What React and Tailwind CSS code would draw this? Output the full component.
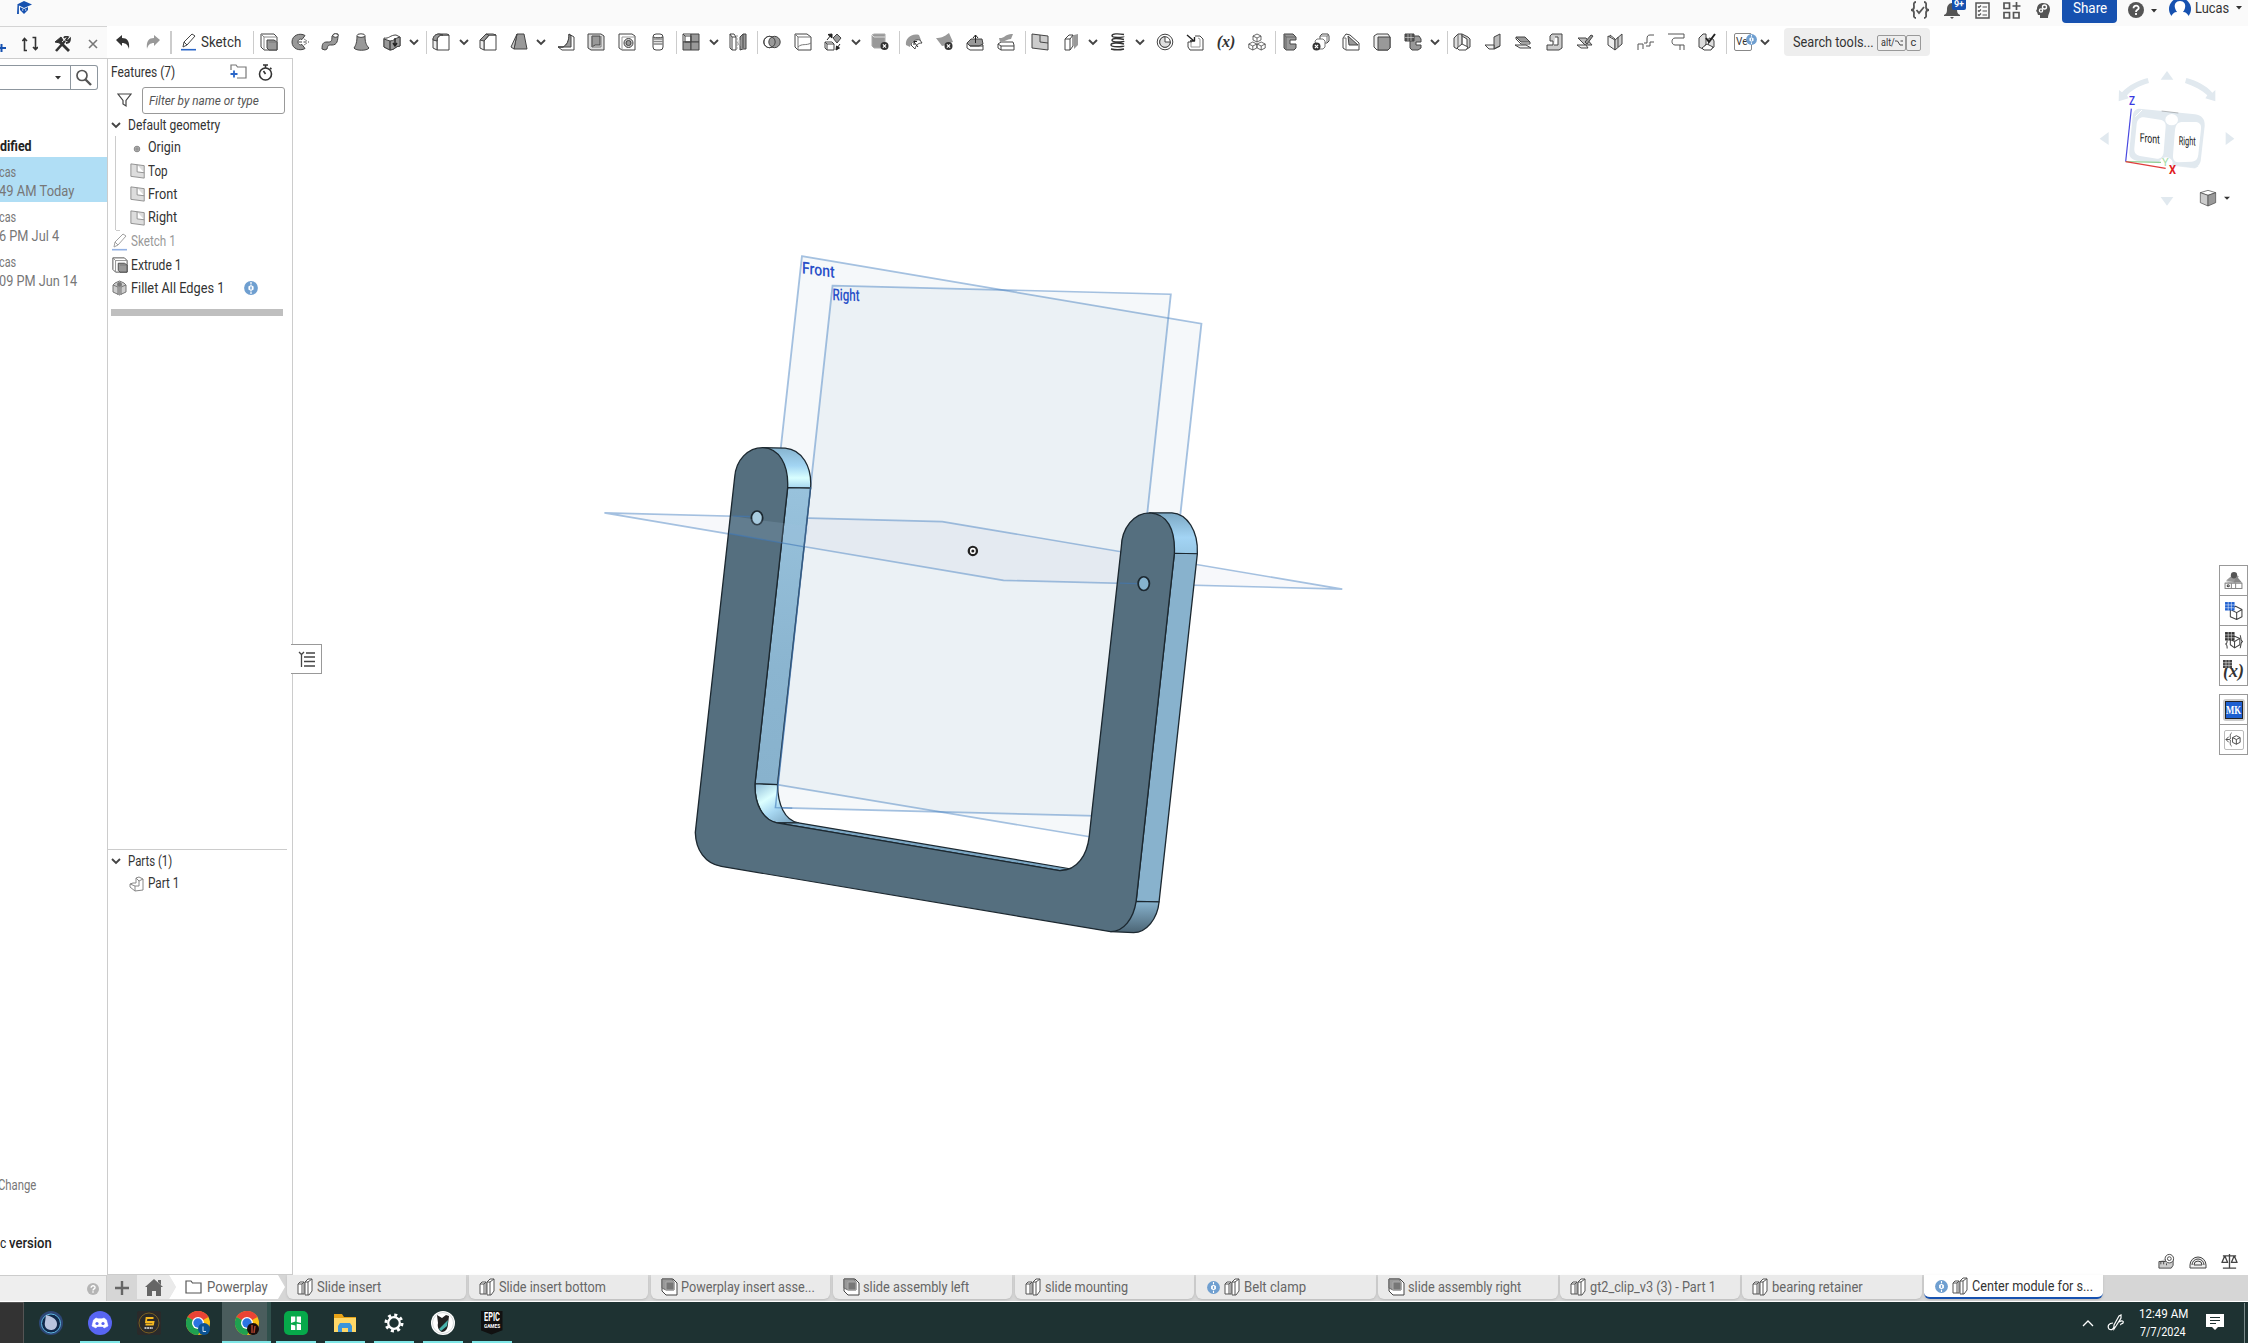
import React, { useLayoutEffect, useRef, useState } from "react";

/* Text squeezed horizontally to an exact width. */
function Fit({ w, children, className = "" }) {
  const ref = useRef(null);
  const [s, setS] = useState(1);
  useLayoutEffect(() => {
    setS(w / ref.current.offsetWidth);
  }, [w, children]);
  return (
    <span className={"block shrink-0 whitespace-nowrap " + className} style={{ width: w }}>
      <span
        ref={ref}
        className="inline-block origin-left"
        style={{ transform: `scaleX(${s})` }}
      >
        {children}
      </span>
    </span>
  );
}

const D = "#444";
const G = "#999";

function I({ children, s = 18, className = "" }) {
  return (
    <svg
      width={s}
      height={s}
      viewBox="0 0 18 18"
      fill="none"
      stroke={D}
      strokeWidth="1"
      strokeLinejoin="round"
      className={"shrink-0 " + className}
    >
      {children}
    </svg>
  );
}

const X = ({ x, y }) => (
  <>
    <circle cx={x} cy={y} r="4" fill="#333" stroke="none" />
    <path d={`M${x - 1.6} ${y - 1.6}l3.2 3.2m0-3.2l-3.2 3.2`} stroke="#fff" strokeWidth="1.2" />
  </>
);

const ic = {
  extrude: (
    <>
      <path d="M1 1h13l3 3v13H4l-3-3z" fill="#fff" />
      <path d="M1 1l3 3h13M4 4v13" stroke="#888" />
      <path d="M7 7h7l3 2v8H9l-2-2z" fill={G} />
      <path d="M9 9h8" stroke="#777" />
    </>
  ),
  revolve: (
    <>
      <path d="M14 2.500C9-.5 1 2 1 9s8 9.500 13 6.500l-3-4c-2 1-4 0-4-2.500s2-3.500 4-2.500z" fill={G} />
      <path d="M8 9h10" strokeDasharray="3 1.500" />
      <path d="M13 6l3 2M13 12l3-2" stroke="#888" />
    </>
  ),
  sweep: (
    <>
      <path d="M1 16c0-5 1-7 5-7 4 0 5 0 5-6l2-2h4c0 7-1 11-6 11-4 0-4 0-5 4l-2 1z" fill={G} />
      <ellipse cx="14.500" cy="2.500" rx="2.700" ry="1.800" fill="#fff" />
    </>
  ),
  loft: (
    <>
      <path d="M5 3c0 6-1 9-3 12 2 3 13 3 15 0-3-3-4-6-4-12z" fill={G} />
      <ellipse cx="9" cy="2.600" rx="4" ry="1.800" fill="#fff" />
    </>
  ),
  thicken: (
    <>
      <path d="M1 5c5 1 6-3 12-3l4 2v9c-5 0-5 4-10 4l-6-3z" fill="#fff" />
      <path d="M1 6l6 2v9l-6-3zM7 8c4 0 5-3 10-4v9c-5 0-5 4-10 4z" fill={G} />
      <path d="M12 5v7m-2-2l2 3 2-3" stroke="#222" strokeWidth="1.400" />
    </>
  ),
  fillet: (
    <>
      <path d="M5 17V8c0-4 2-6 6-6h6v15z" fill="#fff" />
      <path d="M1 15V7c0-4 3-6 6-6h8l2 1h-6C7 2 5 4 5 8v9z" fill="#eee" />
      <path d="M1 7c0-4 3-6 6-6l4 1C7 2 5 4 5 8z" fill={G} />
    </>
  ),
  chamfer: (
    <>
      <path d="M5 17V8l5-6h7v15z" fill="#fff" />
      <path d="M1 15V7l6-6h7l3 1h-7L5 8v9z" fill="#eee" />
      <path d="M1 7l6-6 3 1-5 6z" fill={G} />
    </>
  ),
  draft: (
    <>
      <path d="M7 1h7l3 15H4z" fill={G} />
      <path d="M7 1L1 14l3 2z" fill="#ccc" />
    </>
  ),
  rib: (
    <>
      <path d="M12 1l5 3v13H5l-4-3h5c4-2 6-6 6-13z" fill="#fff" />
      <path d="M12 1l2 2v11H5l-4 0h5c4-2 6-6 6-13z" fill={G} />
    </>
  ),
  shell: (
    <>
      <path d="M1 1h13l3 2v14H4l-3-2z" fill="#ddd" />
      <path d="M5 3h8v9H8l-3 2z" fill={G} />
      <path d="M5 3v11h9V3" stroke="#777" />
    </>
  ),
  hole: (
    <>
      <path d="M1 1h13l3 2v14H4l-3-2z" fill="#fff" />
      <path d="M4 4v13M4 4h13" stroke="#999" />
      <circle cx="10.500" cy="10" r="4.500" fill="#ccc" />
      <circle cx="10.500" cy="10" r="2.500" fill={G} />
    </>
  ),
  thread: (
    <>
      <rect x="4" y="1" width="10" height="16" rx="3" fill="#fff" />
      <path d="M4 6h10M4 8.500h10M4 11h10" stroke="#888" strokeWidth="1.600" />
      <path d="M4 4c3 1 7 1 10 0" />
    </>
  ),
  pattern: (
    <>
      <rect x="1" y="1" width="8" height="8" fill="#fff" />
      <rect x="9" y="1" width="8" height="8" fill={G} />
      <rect x="1" y="9" width="8" height="8" fill={G} />
      <rect x="9" y="9" width="8" height="8" fill={G} />
      <path d="M3 3h6v6H3zM1 1l2 2" />
    </>
  ),
  mirror: (
    <>
      <path d="M1 1h4l2 3v13H3l-2-2zM3 4v13M1 1l2 3h4" fill="#fff" />
      <path d="M8 2v14" stroke="#999" strokeDasharray="2 1" />
      <path d="M11 4l3-3h3v15h-3l-3 1zM14 1v14" fill={G} />
      <path d="M7 8l4 5V7" fill="#ddd" stroke="#999" />
    </>
  ),
  boolean: (
    <>
      <circle cx="6.500" cy="9" r="5.700" fill="#fff" />
      <circle cx="11.500" cy="9" r="5.700" fill={G} />
      <circle cx="6.500" cy="9" r="5.700" />
    </>
  ),
  split: (
    <>
      <path d="M1 1h12l4 3v13H4l-3-3z" fill="#fff" />
      <path d="M1 1l3 3h13M4 4v13M4 14c4-4 8-1 13-4" stroke="#777" />
    </>
  ),
  transform: (
    <>
      <path d="M1 9h7l2 2v6H3l-2-2zM3 11v6M3 11h7M1 9l2 2" fill="#fff" />
      <path d="M13 1l4 4-4 5-4-5z" fill={G} />
      <path d="M3 7l4-5M4 1.500L8 1v4z" fill="#222" stroke="#222" />
      <path d="M16 11l-3 4m-1 2l.5-4 3 2z" fill="#222" stroke="#222" />
    </>
  ),
  deletePart: (
    <>
      <path d="M1 2l2-1h11v11l-2 3H3l-2-2z" fill={G} stroke="#aaa" />
      <path d="M1 2l2 2h11" stroke="#ddd" />
      <X x={13.500} y={13} />
    </>
  ),
  modFillet: (
    <>
      <path d="M1 12C0 6 6 0 14 2l2 5C10 5 6 8 5 14z" fill={G} stroke="none" />
      <path d="M6 12c1-4 5-6 9-5l2 3c-4 0-6 2-7 6z" fill="#fff" />
      <path d="M13 14L9 9m0 3V8.500h3" stroke="#222" />
    </>
  ),
  delFace: (
    <>
      <path d="M0 5c5 0 8-1 13-5l4 9c-4 1-8 4-11 4z" fill={G} stroke="none" />
      <X x={12.500} y={13} />
    </>
  ),
  moveFace: (
    <>
      <path d="M1 10h12l4 2v5H4l-3-2z" fill="#fff" />
      <path d="M1 10l4-4h11l1 5-4 2H4z" fill={G} />
      <path d="M4 13h13" />
      <path d="M9.500 10V2m-2.500 3l2.500-3 2.500 3" stroke="#222" />
    </>
  ),
  replace: (
    <>
      <path d="M1 11l3-2h12l1 3v5H4l-3-2zM4 13h13M1 11l3 2v4" fill="#fff" />
      <path d="M2 5c5 1 7-5 14-4l-2 5c-4 0-6 3-11 3z" fill={G} stroke="none" />
    </>
  ),
  plane: (
    <>
      <path d="M1 1l16 2v14L1 15z" fill="#ccc" />
      <path d="M9 2v7l8 1" />
    </>
  ),
  surf: (
    <>
      <path d="M3 6l4-4h4v11l-3 4H3z" fill="#fff" />
      <path d="M3 6h5v11M8 6l3-4" />
      <path d="M12 2l4-1v11l-4 4V7z" fill={G} stroke="none" />
    </>
  ),
  helix: (
    <path
      d="M15 1.500C9 .5 3 .5 3 2.800s12 1.700 12 .7M15 6.500C9 5 3 5 3 7.300s12 2 12 .7M15 11C9 9.500 2 9.500 2 12s13 2 13 .7M2 16c4 1 9 1 13 0"
      stroke="#333"
      strokeWidth="1.400"
    />
  ),
  curve: (
    <>
      <circle cx="9" cy="9" r="7.800" fill="#fff" />
      <circle cx="9" cy="9" r="5.300" fill="#fff" />
      <path d="M9 3.700v5.300h5.300A5.300 5.300 0 0 1 9 14.300 5.300 5.300 0 0 1 9 3.700z" fill="#ddd" />
    </>
  ),
  derived: (
    <>
      <path d="M9 3h5l3 3v11H4l-2-3V9h4" fill="#fff" />
      <path d="M5 10v4h9V6l-2-1" stroke="#999" />
      <path d="M1 2l7 6M4 8h4.500V4" stroke="#222" strokeWidth="1.400" />
    </>
  ),
  composite: (
    <>
      {[
        [9, 1],
        [4.8, 9],
        [13.2, 9],
      ].map(([x, y]) => (
        <path key={x} d={`M${x} ${y}l4 2v4l-4 2-4-2v-4zm0 8v-4l4-2m-4 2l-4-2`} fill="#fff" strokeWidth=".8" />
      ))}
    </>
  ),
  frame: (
    <>
      <path d="M3 1h9l3 3v3H9v4h6v4l-2 2H5l-2-2z" fill={G} />
      <path d="M3 1l2 3h10M5 4v13" stroke="#666" />
    </>
  ),
  frameTrim: (
    <>
      <path d="M8 3l2-2h6l1 2v5l-2 2H8z" fill="#fff" />
      <path d="M8 3h7l2-1M15 3v6" stroke="#777" />
      <path d="M3 8l2-2h6l2 2v6l-2 2H5z" fill="#fff" stroke="#777" />
      <X x={4.500} y={13.500} />
    </>
  ),
  gusset: (
    <>
      <path d="M1 5l3-4 4 1 9 8v7H4l-3-2z" fill="#fff" />
      <path d="M6 3l1 9h9z" fill={G} />
      <path d="M4 5v12M1 5l3 0" stroke="#777" />
    </>
  ),
  endcap: (
    <>
      <path d="M1 3l3-2h11l2 3v11l-2 2H4l-3-3z" fill="#eee" />
      <path d="M5 4h12v11l-2 2H5z" fill={G} />
    </>
  ),
  cutlist: (
    <>
      <path d="M8 3h7l2 3v3h-5v3h5v3l-3 2H8l-2-2V8z" fill={G} />
      <path d="M1 1h9v7H1z" fill="#555" />
      <path d="M1 4.500h9M4 1v7M7 1v7" stroke="#ddd" strokeWidth=".6" />
    </>
  ),
  sm1: (
    <>
      <path d="M1 5l4-4h4v10l-5 5-3-2z" fill="#ddd" />
      <path d="M9 1l6 3 2 2v8l-3 2V6L9 3z" fill="#ccc" />
      <path d="M4 15l5-4 6 3-2 3H6z" fill="#fff" />
      <path d="M5 1v13M9 1v10" stroke="#666" />
    </>
  ),
  sm2: (
    <>
      <path d="M10 4l6-3v12l-6 3z" fill="#bbb" />
      <path d="M1 12h9v4H5zM10 16l6-3" fill="#eee" />
    </>
  ),
  sm3: (
    <>
      <path d="M2 4l9 0 5 5-9 0z" fill={G} />
      <path d="M2 4l0 2 5 5h9v-2" />
      <path d="M1 12h11l5 3H6z" fill="#eee" />
    </>
  ),
  sm4: (
    <>
      <path d="M5 3l2-2h10v14l-3 2H2v-5h6V8H5z" fill="#ccc" />
      <path d="M10 4h3v8H9" fill="#fff" />
    </>
  ),
  sm5: (
    <>
      <path d="M2 5l8 0 6 7-7 0z" fill="#bbb" />
      <path d="M9 9l6-7 2 1-6 8z" fill={G} />
      <path d="M1 12h9l2 3H5z" fill="#eee" />
    </>
  ),
  sm6: (
    <>
      <path d="M2 3l7 4v10l-7-5z" fill="#eee" />
      <path d="M9 7l7-6v10l-7 6z" fill="#ccc" />
      <path d="M12 4v10M4 4V2l5 4" />
    </>
  ),
  sm7: <path d="M1 17v-6h5v5M7 10h3V6c0-3 1-4 3-4h4M9 13h4V9h4" stroke="#555" />,
  sm8: <path d="M1 1h16v4H8c-4 0-4 7 0 7h9v5M13 12v5" stroke="#555" />,
  sm9: (
    <>
      <path d="M1 5l4-4h3v10l-3 5-4-2zM11 5l4 1 1 2v6l-3 2-3-2z" fill="#ddd" />
      <path d="M4 15l5-4 6 3-2 3H6z" fill="#fff" />
      <path d="M8 5l3 4 6-8" stroke="#222" strokeWidth="2" />
    </>
  ),
};

const Chev = ({ className = "" }) => (
  <svg width="10" height="7" viewBox="0 0 10 7" fill="none" stroke="#444" strokeWidth="1.900" className={"shrink-0 " + className}>
    <path d="M1 1l4 4 4-4" />
  </svg>
);

const Pencil = ({ light }) => (
  <I className={light ? "opacity-50" : ""}>
    <path d="M3 14l1-5 8-8 3 2-8 9zM4 9l3 3" stroke="#444" />
    <path d="M1 16.700h15" stroke="#2a66c8" strokeWidth="1.600" />
  </I>
);

const VarX = ({ className = "" }) => (
  <span className={"font-['Liberation_Serif',serif] font-bold italic text-[16px] leading-none text-[#333] " + className}>(x)</span>
);

const groups = [
  ["w-[172px]", ["extrude", "revolve", "sweep", "loft", "thicken", "v"]],
  ["w-[250px]", ["fillet", "v", "chamfer", "draft", "v", "rib", "shell", "hole", "thread"]],
  ["w-[81px]", ["pattern", "v", "mirror"]],
  ["w-[142px]", ["boolean", "split", "transform", "v", "deletePart"]],
  ["w-[126px]", ["modFillet", "delFace", "moveFace", "replace"]],
  ["w-[250px]", ["plane", "surf", "v", "helix", "v", "curve", "derived", "x", "composite"]],
  ["w-[172px]", ["frame", "frameTrim", "gusset", "endcap", "cutlist", "v"]],
  ["w-[279px]", ["sm1", "sm2", "sm3", "sm4", "sm5", "sm6", "sm7", "sm8", "sm9"]],
];

function Badge({ s = 14 }) {
  return (
    <svg width={s} height={s} viewBox="0 0 14 14" className="shrink-0">
      <circle cx="7" cy="7" r="6.900" fill="#6f9fd0" />
      <path d="M7 4l2.600 1.500v3L7 10 4.400 8.500v-3z" fill="#fff" />
      <path d="M7 1v2.400M7 10.600V13" stroke="#fff" strokeWidth="1.200" />
      <path d="M7 5.500v3" stroke="#6f9fd0" strokeWidth="1.400" />
    </svg>
  );
}

function TopBar() {
  return (
    <div className="flex h-[26px] shrink-0 items-start bg-[#fafafa]">
      <svg width="16" height="15" viewBox="0 0 16 15" className="ml-4" fill="#1651b0">
        <path d="M8 1l8 3.500L8 8 1 4.500z" />
        <path d="M4 7l4 2 4-2v3l-4 4-4-4zM1.500 5h1.400v9H1z" />
        <path d="M6 10h1.300M9 10h1.300" stroke="#fff" />
      </svg>
      <div className="ml-auto flex h-5 items-center">
        <svg width="20" height="18" viewBox="0 0 20 18" fill="none" stroke="#555" strokeWidth="1.800">
          <path d="M6 1C3 1 4 4 4 6S3 9 1 9c2 0 3 1 3 3s-1 5 2 5M14 1c3 0 2 3 2 5s1 3 3 3c-2 0-3 1-3 3s1 5-2 5M6.500 9l2.500 3 5-6" />
        </svg>
        <span className="relative ml-3.5 block h-5 w-[22px]">
          <svg width="16" height="17" viewBox="0 0 16 17" fill="#555" className="mt-[2px]">
            <path d="M8 1C5 1 3 4 3 7c0 4-1 5-3 6v1h16v-1c-2-1-3-2-3-6 0-3-2-6-5-6zM6 15h4l-2 2z" />
          </svg>
          <span className="absolute top-0 left-[8px] h-[10px] w-[14px] rounded-b-[2px] bg-[#1651b0] text-center text-[9px] leading-[8px] font-bold text-white">9+</span>
        </span>
        <svg width="15" height="17" viewBox="0 0 15 17" fill="none" stroke="#555" strokeWidth="1.500" className="ml-[9px]">
          <rect x="1" y="1" width="13" height="15" />
          <path d="M3 4.500l1 1 2-2M3 8.500l1 1 2-2M3 12.500l1 1 2-2M7.500 5H12M7.500 9H12M7.500 13H12" strokeWidth="1.200" />
        </svg>
        <svg width="18" height="17" viewBox="0 0 18 17" fill="none" stroke="#555" strokeWidth="1.700" className="ml-[13px]">
          <path d="M1 1h5.500v5.500H1zM1 10.500h5.500V16H1zM10.500 10.500H16V16h-5.500zM13.500 0v8M9.500 4h8" />
        </svg>
        <svg width="16" height="17" viewBox="0 0 16 17" className="ml-[14px]">
          <path d="M8 1c5 0 7 3 7 6 0 4-2 5-2 9H5v-3H3l-1-3-1-1 1-2C2 3 5 1 8 1z" fill="#555" />
          <circle cx="9.500" cy="5" r="2" fill="none" stroke="#fff" strokeWidth="1.400" />
          <circle cx="6" cy="8.500" r="1.600" fill="none" stroke="#fff" strokeWidth="1.300" />
        </svg>
      </div>
      <div className="ml-[11px] flex h-[23px] w-[55px] justify-center rounded-b bg-[#1651b0] pt-px leading-[14px] text-white">
        <Fit w={34} className="text-[15px]">Share</Fit>
      </div>
      <svg width="16" height="16" viewBox="0 0 16 16" className="mt-[2px] ml-[11px]">
        <circle cx="8" cy="8" r="8" fill="#555" />
        <path d="M5.500 6.200C5.500 2.800 11 3 10.700 6.200 10.500 8 8 7.800 8 10M8 11v2" fill="none" stroke="#fff" strokeWidth="1.800" />
      </svg>
      <svg width="6" height="4" viewBox="0 0 6 4" className="mt-[9px] ml-[7px]"><path d="M0 0h6L3 3.500z" fill="#333" /></svg>
      <svg width="22" height="20" viewBox="0 0 22 20" className="ml-3">
        <circle cx="11" cy="9" r="11" fill="#1651b0" />
        <path d="M11 1c4 0 6 3 5 7-.5 2-1.500 3-2 4 3 0 5 2 6 5l1 3H1l1-3c1-3 3-5 6-5-.5-1-1.500-2-2-4-1-4 1-7 5-7z" fill="#fff" />
      </svg>
      <Fit w={34} className="mt-[-1px] ml-1 text-[14px] leading-[18px] text-[#333]">Lucas</Fit>
      <svg width="6" height="4" viewBox="0 0 6 4" className="mt-[6px] mr-[6px] ml-[7px]"><path d="M0 0h6L3 3.500z" fill="#333" /></svg>
    </div>
  );
}

function Toolbar() {
  return (
    <div className="flex h-8 shrink-0">
      <div className="flex w-[107px] items-center border-t border-[#d4d4d4] bg-[#fafafa] pt-0.5">
        <svg width="7" height="10" viewBox="0 0 7 10" className="mt-2" stroke="#1651b0" strokeWidth="2"><path d="M0 5h6M1.500 1v8" /></svg>
        <svg width="16" height="16" viewBox="0 0 16 16" className="ml-[15px]" fill="none" stroke="#333" strokeWidth="1.600">
          <path d="M5 14.500H2.500V3M.3 5L2.500 2.500 5 5M10.500 1.500h3V13M11 11l2.500 2.500L16 11" />
        </svg>
        <svg width="17" height="16" viewBox="0 0 17 16" className="ml-4" fill="none" stroke="#333">
          <path d="M2 15L11 5" strokeWidth="2.600" />
          <path d="M10 2c1-2 4-1 4-1l-2 3 2 1 2-2c0 3-2 4-4 4" strokeWidth="1.800" />
          <path d="M6 6l9 9" strokeWidth="2.800" />
          <path d="M1 6l6-5 2 3-3 3z" fill="#333" />
        </svg>
        <svg width="10" height="10" viewBox="0 0 10 10" className="ml-[17px]" stroke="#777" strokeWidth="1.600"><path d="M1 1l8 8M9 1L1 9" /></svg>
      </div>
      <div className="flex items-center">
        <svg width="14" height="14" viewBox="0 0 14 14" className="ml-[9px]" fill="#333"><path d="M0 5l6-5v3c5 0 8 3 7 11-1-4-3-6-7-6v3z" /></svg>
        <svg width="14" height="14" viewBox="0 0 14 14" className="ml-4" fill="#999"><path d="M14 5L8 0v3C3 3 0 6 1 14c1-4 3-6 7-6v3z" /></svg>
        <span className="ml-[10px] h-[23px] w-[1.500px] bg-[#ccc]" />
        <span className="ml-2"><Pencil /></span>
        <Fit w={40} className="ml-[3px] text-[14px] text-[#333]">Sketch</Fit>
        <span className="ml-[12.500px] h-[23px] w-px bg-[#ccc]" />
      </div>
      {groups.map(([w, items], gi) => (
        <div key={gi} className={"flex shrink-0 items-center " + w}>
          {items.map((k, i) =>
            k === "v" ? (
              <span key={i} className="flex w-[16.400px] shrink-0 justify-center pr-0.5"><Chev /></span>
            ) : (
              <span key={i} className="flex w-[30.600px] shrink-0 justify-center">
                {k === "x" ? <VarX /> : <I>{ic[k]}</I>}
              </span>
            )
          )}
          <span className="-mr-px ml-auto h-[23px] w-[1.500px] shrink-0 bg-[#ccc]" />
        </div>
      ))}
      <div className="flex items-center">
        <span className="relative ml-[8px] block h-[18px] w-[18px] rounded-[2px] border border-[#888] pl-px text-[10px] leading-4 text-[#333]">
          Ve
          <span className="absolute top-0 left-[11px]"><Badge s={11} /></span>
        </span>
        <Chev className="ml-[8px]" />
        <div className="ml-[14px] flex h-7 w-[146px] items-center rounded bg-[#eee] pl-[9px] text-[#333]">
          <Fit w={81} className="text-[14px]">Search tools...</Fit>
          <span className="mt-0.5 ml-[3px] flex h-4 w-[29px] items-center justify-center rounded-[2px] border border-[#999] text-[11px] leading-3">
            <Fit w={14}>alt/</Fit>
            <svg width="8" height="6" viewBox="0 0 8 6" fill="none" stroke="#444"><path d="M0 1h2.500l2.500 4h3M5.500 1H8" /></svg>
          </span>
          <span className="mt-0.5 flex h-4 w-[15px] items-center justify-center rounded-[2px] border border-[#999] text-[11px] leading-3">c</span>
        </div>
      </div>
    </div>
  );
}

const history = [
  ["cas", 17, "49 AM Today", 75, true],
  ["cas", 17, "6 PM Jul 4", 60, false],
  ["cas", 17, "09 PM Jun 14", 78, false],
];

function LeftPanel() {
  return (
    <div className="flex h-full w-[107px] shrink-0 flex-col border-t border-[#ccc] text-[14px] text-[#777]">
      <div className="mt-1.5 flex h-[25px] w-[98px] rounded-r-[3px] border border-l-0 border-[#8d969e]">
        <div className="flex w-[71px] items-center justify-end border-r border-[#8d969e] pr-[9px]">
          <svg width="6" height="4" viewBox="0 0 6 4"><path d="M0 0h6L3 3.500z" fill="#333" /></svg>
        </div>
        <svg width="17" height="17" viewBox="0 0 17 17" className="mt-[3px] ml-1" fill="none" stroke="#555">
          <circle cx="7" cy="6.500" r="5" strokeWidth="1.700" />
          <path d="M10.500 10.500L16 16" strokeWidth="2.400" />
        </svg>
      </div>
      <div className="mt-[46px] mb-px h-5 leading-5 font-bold text-[#222]"><Fit w={32}>dified</Fit></div>
      {history.map(([a, aw, b, bw, sel], i) => (
        <div key={i} className={"h-[45px] pt-1.5 leading-[19px] " + (sel ? "bg-[#b0def5]" : "")}>
          <Fit w={aw} className="-ml-px">{a}</Fit>
          <Fit w={bw} className="-ml-px">{b}</Fit>
        </div>
      ))}
      <div className="mt-auto flex flex-col">
        <Fit w={38} className="-ml-[2px] leading-5">Change</Fit>
        <div className="mt-[38px] mb-[22px] flex gap-[3px] leading-5 text-[#222]">
          <Fit w={6}>c</Fit>
          <Fit w={43} className="font-medium">version</Fit>
        </div>
      </div>
    </div>
  );
}

const PlaneIcon = () => (
  <svg width="16" height="16" viewBox="0 0 18 18" fill="#ddd" stroke="#888" className="shrink-0">
    <path d="M1 1l15 2v14L1 15zM8 2v8l8 1" />
  </svg>
);

function FeaturePanel() {
  return (
    <div className="flex h-full w-[186px] shrink-0 flex-col border border-[#ccc] text-[14px] text-[#333]">
      <div className="mt-[3px] flex h-5 items-center pl-[3px]">
        <Fit w={64}>Features (7)</Fit>
        <svg width="18" height="16" viewBox="0 0 18 16" className="ml-[54px]" fill="none" stroke="#777" strokeWidth="1.200">
          <path d="M2 6V1h5l1.500 2H17v11H8" />
          <path d="M5 6.500v7M1.500 10h7" stroke="#2a66c8" strokeWidth="1.800" />
        </svg>
        <svg width="15" height="17" viewBox="0 0 15 17" className="ml-[11px]" fill="none" stroke="#333" strokeWidth="1.600">
          <circle cx="7.500" cy="10" r="6" />
          <path d="M5 1h5M7.500 1v3M12 4l1.500 1M7.500 10L5.500 7" />
        </svg>
      </div>
      <div className="mt-[5px] flex h-[27px] items-center">
        <svg width="15" height="15" viewBox="0 0 15 15" className="ml-[9px]" fill="none" stroke="#444" strokeWidth="1.200"><path d="M1 1h13L9 7.500V13l-3-2V7.500z" /></svg>
        <div className="ml-[10px] flex h-[27px] w-[143px] items-center rounded-[3px] border border-[#999] pl-1.5 text-[#555] italic">
          <Fit w={110} className="text-[13px]">Filter by name or type</Fit>
        </div>
      </div>
      <div className="flex h-[22px] items-center pl-[3px]">
        <Chev /> <Fit w={92} className="ml-[7px]">Default geometry</Fit>
      </div>
      <div className="ml-[7px] h-[94px] border-l border-[#ccc]">
        {[["Origin", 33], ["Top", 20], ["Front", 29], ["Right", 29]].map(([n, w], i) => (
          <div key={n} className="flex h-[23.400px] items-center pl-[14px]">
            {i === 0 ? (
              <svg width="16" height="16" viewBox="0 0 16 16" fill="#bbb" stroke="#888"><circle cx="7" cy="9" r="2.800" /><path d="M7 7v4M5 9h4" /></svg>
            ) : (
              <PlaneIcon />
            )}
            <Fit w={w} className="ml-0.5">{n}</Fit>
          </div>
        ))}
        <div className="h-px w-[4px] bg-[#ccc]" />
      </div>
      <div className="flex h-[23.400px] items-center pl-[3px] text-[#999]">
        <Pencil light /><Fit w={45} className="ml-[2px]">Sketch 1</Fit>
      </div>
      <div className="flex h-[23.400px] items-center pl-[4px]">
        <I s={16}>{ic.extrude}</I><Fit w={51} className="ml-[3px]">Extrude 1</Fit>
      </div>
      <div className="flex h-[23.400px] items-center pl-[4px]">
        <svg width="15" height="16" viewBox="0 0 15 16" stroke="#777"><path d="M3 3l4.500-2L12 3l2 2v7l-6.500 3L1 12V5z" fill="#ccc" /><path d="M1 5l5 2v8M14 5L9 7v8" fill="none" /><path d="M6 7h3v8H6z" fill="#999" stroke="none" /><circle cx="7.500" cy="4.500" r="2" fill="#777" /></svg>
        <Fit w={93} className="ml-1">Fillet All Edges 1</Fit>
        <span className="ml-[20px]"><Badge /></span>
      </div>
      <div className="mt-[8.500px] ml-[3px] h-[7px] w-[172px] shrink-0 bg-[#bfbfbf]" />
      <div className="mt-auto h-[425px] shrink-0">
        <div className="w-[179px] border-t border-[#ccc]" />
        <div className="flex h-[22px] items-center pl-[3px]">
          <Chev /><Fit w={44} className="ml-[7px]">Parts (1)</Fit>
        </div>
        <div className="flex h-[23.400px] items-center pl-[21px]">
          <svg width="16" height="16" viewBox="0 0 16 16" fill="#fff" stroke="#888"><path d="M7 2l3-1 4 2v11l-8 1-5-4V8l3-1h3zM7 2l3 3v5H6L1 8M10 5l4-2M6 10v5" /></svg>
          <Fit w={31} className="ml-[3px]">Part 1</Fit>
        </div>
      </div>
    </div>
  );
}

function Model() {
  return (
    <svg
      width="800"
      height="720"
      viewBox="0 0 1568 1568"
      preserveAspectRatio="none"
      fill="none"
      className="mt-[172px] ml-[287px] shrink-0"
    >
      <defs>
        <linearGradient id="capL" x1="0" y1="474" x2="0" y2="562" gradientUnits="userSpaceOnUse">
          <stop offset="0" stopColor="#86b3ce" /><stop offset=".45" stopColor="#a3d5f3" /><stop offset=".75" stopColor="#d9ffff" /><stop offset="1" stopColor="#a5d5ef" />
        </linearGradient>
        <linearGradient id="side" x1="0" y1="562" x2="0" y2="1208" gradientUnits="userSpaceOnUse">
          <stop offset="0" stopColor="#98c2dc" /><stop offset=".6" stopColor="#8bb5d0" /><stop offset="1" stopColor="#88b2cd" />
        </linearGradient>
        <linearGradient id="filL" x1="343" y1="1206" x2="410" y2="1300" gradientUnits="userSpaceOnUse">
          <stop offset="0" stopColor="#8fbcd8" /><stop offset=".35" stopColor="#dcffff" /><stop offset=".6" stopColor="#a8d8f2" /><stop offset="1" stopColor="#769fba" />
        </linearGradient>
        <linearGradient id="capR" x1="0" y1="616" x2="0" y2="705" gradientUnits="userSpaceOnUse">
          <stop offset="0" stopColor="#7ca8c3" /><stop offset=".6" stopColor="#a3d4f4" /><stop offset="1" stopColor="#98c8e6" />
        </linearGradient>
        <linearGradient id="filR" x1="0" y1="1462" x2="0" y2="1530" gradientUnits="userSpaceOnUse">
          <stop offset="0" stopColor="#88b4cf" /><stop offset="1" stopColor="#4c6575" />
        </linearGradient>
      </defs>
      <g fill="#5a8fae" fillOpacity=".06" stroke="#4d86c4" strokeOpacity=".5" strokeWidth="3.600">
        <path d="M435 57L1218 204 1105 1341 322 1196z" />
        <path d="M495 121L1158 140 1048 1277 383 1258z" />
        <path d="M48 616L710 635 1494 782 830 763z" fill="#6070b0" fillOpacity=".05" />
      </g>
      <g stroke="#1c2830" strokeWidth="2.600" strokeLinejoin="round">
        <path d="M358 474L402 475C435 478 455 515 452 562L407 561z" fill="url(#capL)" />
        <path d="M407 561L452 562 387 1208 343 1206z" fill="url(#side)" />
        <path d="M343 1206L387 1208C388 1250 400 1285 428 1291L386 1291C358 1285 342 1250 343 1206z" fill="url(#filL)" />
        <path d="M386 1291L428 1291 960 1391 940 1395z" fill="#7ba6c3" />
        <path d="M1117 616L1160 616C1190 618 1212 655 1210 705L1165 704z" fill="url(#capR)" />
        <path d="M1165 704L1210 705 1135 1463 1090 1462z" fill="#88b2cd" />
        <path d="M1090 1462L1135 1463C1132 1500 1110 1530 1085 1530L1040 1528z" fill="url(#filR)" />
        <path
          d="M303 540C305 500 330 474 358 474 390 475 409 510 407 561L343 1206C342 1250 358 1285 386 1291L940 1395C975 1396 994 1360 998 1321L1061 690C1062 650 1085 616 1117 616 1150 618 1167 650 1165 704L1090 1462C1085 1500 1065 1528 1040 1528L277 1386C245 1380 227 1350 226 1312z"
          fill="#556f7f"
        />
        <ellipse cx="347" cy="627" rx="11" ry="15" fill="#a9cde0" strokeWidth="3.500" />
        <ellipse cx="1105" cy="770" rx="11" ry="15" fill="#86b3ce" strokeWidth="3.500" />
      </g>
      <path d="M299 623L333 624M361 633L450 645 440 690 292 661 297 623z" fill="#a8c6e0" fillOpacity=".17" />
      <path d="M300 623L333 624M292 661L440 690M1058 769L1092 770M452 560L383 1258 416 1259" stroke="#3f78b8" strokeOpacity=".6" strokeWidth="3" />
      <g fill="#2850c8" className="font-['Roboto',sans-serif] font-medium">
        <text transform="translate(435 94) skewY(9)" fontSize="36" textLength="64" lengthAdjust="spacingAndGlyphs">Front</text>
        <text transform="translate(495 153) skewY(2)" fontSize="36" textLength="53" lengthAdjust="spacingAndGlyphs">Right</text>
      </g>
      <ellipse cx="770" cy="699" rx="8" ry="9" fill="#fff" stroke="#222" strokeWidth="4.500" />
      <ellipse cx="770" cy="699" rx="3" ry="3.300" fill="#222" />
    </svg>
  );
}

function ViewCube() {
  return (
    <svg width="155" height="147" viewBox="699 200 465 441" fill="none" className="shrink-0">
      <g fill="#e1e9ef">
        <path d="M902 241L921 215 940 241zM902 593L921 619 940 593zM746 398L719 418 746 437zM1097 398L1123 418 1097 437z" />
        <path d="M863 236L867 251C840 258 815 272 801 288L806 297 776 306 777 272 786 279C805 258 835 243 863 236z" />
        <path d="M979 236L975 251C1002 260 1025 272 1042 288L1036 297 1066 306 1066 272 1057 280C1038 258 1008 243 979 236z" />
        <path d="M838 328L1005 345C1025 348 1036 360 1034 380L1022 485C1019 498 1010 504 1000 504L830 484C812 480 806 470 808 455L818 350C820 335 828 328 838 328z" />
        <path d="M930 497L1005 506 1015 500" stroke="#e1e9ef" strokeWidth="2" />
      </g>
      <g fill="#fff">
        <path d="M852 354L900 361C912 363 918 370 917 382L911 457C910 471 903 478 891 478L840 470C828 468 822 460 823 447L830 374C832 360 840 353 852 354z" />
        <path d="M965 368L1008 368C1020 370 1024 377 1023 388L1015 465C1013 480 1008 486 994 487L955 489C943 488 938 481 939 468L945 392C947 376 953 369 965 368z" />
        <ellipse cx="935" cy="361" rx="19" ry="17" />
        <ellipse cx="918" cy="490" rx="20" ry="16" />
        <path d="M826 352L846 332" stroke="#fff" strokeWidth="3" />
      </g>
      <path d="M905 335L955 341" stroke="#444" />
      <path d="M814 328L797 487" stroke="#4848e0" strokeWidth="3.500" />
      <path d="M797 487L903 489" stroke="#7cc87c" strokeWidth="3" />
      <path d="M797 487L917 507" stroke="#e03c3c" strokeWidth="3.500" />
      <g className="font-['Roboto',sans-serif]">
        <text x="807" y="317" fontSize="38" fill="#3a3ae0" textLength="18" lengthAdjust="spacingAndGlyphs" className="font-medium">Z</text>
        <text x="906" y="500" fontSize="32" fill="#a5dca5" textLength="20" lengthAdjust="spacingAndGlyphs">Y</text>
        <text x="927" y="525" fontSize="37" fill="#e02020" textLength="21" lengthAdjust="spacingAndGlyphs" className="font-bold">X</text>
        <text transform="translate(839 427) skewY(6)" fontSize="37" fill="#222" textLength="61" lengthAdjust="spacingAndGlyphs">Front</text>
        <text transform="translate(956 437) skewY(2)" fontSize="37" fill="#222" textLength="51" lengthAdjust="spacingAndGlyphs">Right</text>
      </g>
      <g stroke="#444" strokeWidth="2">
        <path d="M1021 580L1044 573 1067 580 1044 588z" fill="#fff" />
        <path d="M1021 580L1044 588V620L1021 610z" fill="#ccc" />
        <path d="M1067 580L1044 588V620L1067 610z" fill="#999" />
      </g>
      <path d="M1092 592h18l-9 9z" fill="#333" />
    </svg>
  );
}

const Table = ({ c }) => (
  <g>
    <path d="M1 1h9v8H1z" fill={c} stroke="none" />
    <path d="M1 3.700h9M1 6.400h9M4 1v8M7 1v8" stroke="#fff" strokeWidth=".5" />
  </g>
);

const cell = "flex h-[31px] shrink-0 items-center justify-center border border-[#999] bg-white";

function SideButtons() {
  return (
    <div className="mt-auto mb-[520px] ml-auto flex w-[29px] flex-col">
      <div className={cell}>
        <I s={19}>
          <path d="M2 10l5-5 6 3-5 6z" fill="#ccc" stroke="none" />
          <path d="M2 9l7-6 5 2-3 6z" fill={G} stroke="none" />
          <circle cx="9.500" cy="4" r="3" fill="#555" stroke="none" />
          <path d="M12 5l5 6H9z" fill="#888" stroke="none" />
          <path d="M1 11.500h16v5H1z" fill="#fff" stroke="#888" />
          <path d="M11 11.500v5M7 11.500v5" stroke="#888" />
          <circle cx="4" cy="14" r="1" />
        </I>
      </div>
      <div className={cell + " -mt-px"}>
        <I s={19}><path d="M11 5l6 3v7l-5 2.500L6 15V8zM6 8l6 3 5-3M12 11v6" fill="#fff" /><Table c="#1d5fd0" /></I>
      </div>
      <div className={cell + " -mt-px"}>
        <I s={19}><path d="M10 5l5 2v6l-5 3-4-3V8zM6 8l4 2 5-3M10 10v6" fill="#fff" /><path d="M3 9c0 2-.5 3-1.500 3.300C2.500 12.500 3 13 3 16.500M15 4c1.500 0 0 5 2.500 6-2.500 1-1 6-2.500 6" /><Table c="#333" /></I>
      </div>
      <div className={cell + " -mt-px"}>
        <span className="relative flex"><VarX className="text-[18px]" /><svg width="9" height="8" viewBox="1 1 9 8" className="absolute -top-0.5 left-0"><Table c="#444" /></svg></span>
      </div>
      <div className={cell + " mt-2"}>
        <span className="flex h-[22px] w-[22px] items-center justify-center rounded-[3px] bg-[#ccc]">
          <span className="flex h-[18px] w-[18px] items-center justify-center border border-[#222] bg-[#1d5fd0] font-['Liberation_Serif',serif] text-[13px] leading-4 font-bold text-white">
            <Fit w={15}>MK</Fit>
          </span>
        </span>
      </div>
      <div className={cell + " -mt-px"}>
        <span className="flex h-5 w-5 items-center justify-center rounded-[2px] border border-[#bbb]">
          <I s={17}><path d="M12 5l4 2v5l-4 2-4-2V7zM8 7l4 2 4-2M12 9v5M4 6L1 9l3 3M1 9h4M7 2C4 4 7 8 5 9c2 1-1 5 2 7" /></I>
        </span>
      </div>
    </div>
  );
}

function Viewport() {
  return (
    <div className="flex min-w-0 flex-1">
      <div className="mt-[586px] -ml-0.5 flex h-[30px] w-[31px] shrink-0 items-center justify-center border border-l-0 border-[#999] bg-white">
        <svg width="17" height="16" viewBox="0 0 17 16" fill="none" stroke="#444" strokeWidth="1.300"><path d="M8 2h9M6 6h11M6 10.500h11M6 15h11M1 1l2.500 2.500L6 1M3.500 4v12" /></svg>
      </div>
      <div className="-ml-[29px] flex flex-1"><Model /></div>
      <div className="flex w-[155px] flex-col pt-[8px]">
        <ViewCube />
        <SideButtons />
      </div>
    </div>
  );
}

const PartTab = () => (
  <svg width="16" height="18" viewBox="0 0 16 18" fill="#fff" stroke="#555" className="shrink-0"><path d="M1 6l2-2h4v12H1zM1 6h4v10M5 6l2-2M8 4l3-3h4v12l-3 4H8zM8 4h3v13M11 4l4-3" /></svg>
);
const AsmTab = () => (
  <svg width="17" height="18" viewBox="0 0 17 18" fill="#fff" stroke="#444" className="shrink-0"><path d="M1 1h11l4 4v12H5l-4-4z" /><path d="M1 1h10l2 3v8H5l-4-2z" fill="#999" stroke="#666" /><path d="M5 4h8v8H5z" fill="#777" stroke="#aaa" /></svg>
);

const tabs = [
  ["p", "Slide insert", 64],
  ["p", "Slide insert bottom", 107],
  ["a", "Powerplay insert asse...", 134],
  ["a", "slide assembly left", 106],
  ["p", "slide mounting", 83],
  ["bp", "Belt clamp", 62],
  ["a", "slide assembly right", 113],
  ["p", "gt2_clip_v3 (3) - Part 1", 126],
  ["p", "bearing retainer", 91],
  ["bp", "Center module for s...", 121],
];

function Tabs() {
  return (
    <div className="flex h-[27px] shrink-0 border-b border-white bg-[#d6d6d6] text-[14px] text-[#666]">
      <div className="flex w-[107px] items-center justify-end border-t border-r border-[#ccc] bg-[#eee] pr-[7px]">
        <svg width="12" height="12" viewBox="0 0 16 16"><circle cx="8" cy="8" r="8" fill="#b5b5b5" /><path d="M5.500 6.200C5.500 2.800 11 3 10.700 6.200 10.500 8 8 7.800 8 10M8 11v2" fill="none" stroke="#fff" strokeWidth="1.800" /></svg>
      </div>
      <svg width="14" height="14" viewBox="0 0 14 14" className="mt-1.5 ml-2 shrink-0" stroke="#666" strokeWidth="2.400"><path d="M0 7h14M7 0v14" /></svg>
      <div className="ml-2 flex h-6 w-8 shrink-0 items-center bg-[#eaeaea] pl-2">
        <svg width="18" height="17" viewBox="0 0 18 17" fill="#666"><path d="M9 0l9 8h-2v9h-5v-5H7v5H2V8H0zM13 1h3v5l-3-3z" /></svg>
      </div>
      <svg width="8" height="24" viewBox="0 0 8 24" className="-mr-[8px] shrink-0"><path d="M0 0l7 12-7 12z" fill="#eaeaea" /></svg>
      <div className="flex h-6 w-[118px] shrink-0 items-center bg-white pl-4 [clip-path:polygon(0_0,109px_0,116px_50%,109px_100%,0_100%,7px_50%)]">
        <svg width="17" height="14" viewBox="0 0 17 14" fill="none" stroke="#555" strokeWidth="1.200"><path d="M1 1h5l1.500 2H16v10H1z" /></svg>
        <Fit w={61} className="ml-[5px]">Powerplay</Fit>
      </div>
      <div className="flex gap-[2.500px]">
        {tabs.map(([k, t, w], i) => (
          <div
            key={t}
            className={
              "flex h-6 w-[179.400px] shrink-0 items-center rounded-b-md shadow-sm " +
              (i === 9 ? "border-b-2 border-[#1651b0] bg-white text-[#333] " : "bg-[#eaeaea] ") +
              (k === "bp" ? "pl-[11px]" : "pl-[10px]")
            }
          >
            {k === "bp" && <span className="mr-1"><Badge s={13} /></span>}
            {k === "a" ? <AsmTab /> : <PartTab />}
            <Fit w={w} className={k === "a" ? "ml-[3px]" : "ml-[4px]"}>{t}</Fit>
          </div>
        ))}
      </div>
    </div>
  );
}

const Chrome = ({ children }) => (
  <svg width="24" height="24" viewBox="0 0 24 24">
    <circle cx="12" cy="12" r="12" fill="#fbc116" />
    <path d="M12 12L1.600 6A12 12 0 0 1 22.400 6z" fill="#ea4335" />
    <path d="M12 12L1.600 6A12 12 0 0 0 12 24l5-9z" fill="#1fa050" />
    <circle cx="12" cy="12" r="6" fill="#fff" />
    <circle cx="12" cy="12" r="4.700" fill="#2b74e2" />
    {children}
  </svg>
);

const apps = [
  <svg width="24" height="24" viewBox="0 0 24 24"><circle cx="12" cy="12" r="12" fill="#2d4777" /><circle cx="12" cy="12.500" r="9.500" fill="#10284a" stroke="#5fb8e0" /><path d="M7 4c8 2 11 5 11 9 0 5-4 6-6 6-5 0-7-4-6-8z" fill="#b9c4de" /></svg>,
  <svg width="24" height="24" viewBox="0 0 24 24"><circle cx="12" cy="12" r="12" fill="#5865f2" /><path d="M8 7l2 .8h4L16 7l2.500 2 1.500 6-4 2-1-1.500H9L8 17l-4-2 1.500-6z" fill="#fff" stroke="#fff" strokeLinejoin="round" strokeWidth=".6" /><circle cx="9" cy="12.500" r="1.600" fill="#5865f2" /><circle cx="15" cy="12.500" r="1.600" fill="#5865f2" /></svg>,
  <svg width="24" height="24" viewBox="0 0 24 24" fill="none"><rect width="24" height="24" rx="2" fill="#2a2a2a" /><circle cx="12" cy="12" r="10" stroke="#8a6b20" strokeWidth=".8" /><path d="M16.500 7H9.500L9 11h7.500l-.5 2.500H8.500" stroke="#f5b820" strokeWidth="1.800" /><path d="M7.500 17h8.500" stroke="#eee" strokeWidth="1.600" strokeDasharray="2 .6" /></svg>,
  <Chrome><circle cx="18" cy="18" r="6" fill="#0b5394" /><path d="M17 15.500v5h3" fill="none" stroke="#cfe2f3" /></Chrome>,
  <Chrome><circle cx="18" cy="18" r="6" fill="#1a0c0a" /><path d="M17 14v8M20 15l-1 7" stroke="#a8402c" strokeWidth="1.500" /></Chrome>,
  <svg width="24" height="24" viewBox="0 0 24 24"><rect width="24" height="24" rx="5" fill="#06a94a" /><path d="M7 5.500h4.300v5L7 12zM12.700 5.500H17V12l-4.300-1zM7 13.500l4.300 1v4.500H7zM12.700 12.800l4.300.5V19h-4.300z" fill="#fff" /></svg>,
  <svg width="24" height="24" viewBox="0 0 24 24"><path d="M1 3h8l2 3h12v15H1z" fill="#e8a317" /><path d="M1 7h22v14H1z" fill="#ffd868" /><path d="M5 21v-6l2-3h10l2 3v6h-4v-4H9v4z" fill="#3a95dc" /></svg>,
  <svg width="22" height="22" viewBox="0 0 22 22" fill="none" stroke="#fff"><circle cx="11" cy="11" r="5.800" strokeWidth="2.200" /><circle cx="11" cy="11" r="8" strokeWidth="3" strokeDasharray="3 3.280" /></svg>,
  <svg width="24" height="24" viewBox="0 0 24 24"><circle cx="12" cy="12" r="12" fill="#fff" /><circle cx="12" cy="12" r="10.500" fill="none" stroke="#d5dada" /><path d="M6 4l5 3 4-3 3 1-1 8c0 5-3 8-6 8-3-1-5-5-4-9z" fill="#222" /><path d="M8 18l9-9-1 6-6 5z" fill="#49b2ac" /></svg>,
  <span className="flex h-6 w-[22px] flex-col items-center bg-[#111] pt-px text-white [clip-path:polygon(0_0,100%_0,100%_82%,50%_100%,0_82%)]">
    <Fit w={16} className="text-[12px] leading-[11px] font-bold">EPIC</Fit>
    <Fit w={16} className="text-[5px] leading-[6px] font-bold">GAMES</Fit>
  </span>,
];

function Taskbar() {
  return (
    <div className="flex h-[41px] shrink-0 bg-[#1e3232]">
      <div className="w-[24px] shrink-0 border-t border-r border-[#555] bg-[#333]" />
      <div className="ml-[2px] flex">
        {apps.map((a, i) => (
          <div
            key={i}
            className={
              "relative flex w-[49px] items-center justify-center " +
              (i === 4 ? "border-r-4 border-[#30504c] bg-[#4a5d5d] pl-[4px]" : "")
            }
          >
            {a}
            {(i === 1 || i >= 5) && <span className="absolute right-[4px] bottom-0 left-[5px] h-[2px] bg-[#7ee6e6]" />}
            {i === 4 && <span className="absolute -right-1 bottom-0 left-0 h-[2px] bg-[#7ee6e6]" />}
          </div>
        ))}
      </div>
      <div className="ml-auto flex items-center text-white">
        <svg width="12" height="8" viewBox="0 0 12 8" fill="none" stroke="#fff" strokeWidth="1.300"><path d="M1 7l5-5 5 5" /></svg>
        <svg width="18" height="18" viewBox="0 0 18 18" fill="none" stroke="#fff" strokeWidth="1.200" className="ml-[13px]"><path d="M7 11l5-9 2-1v3L9 12l-2 3zM6 9c-4 0-6 3-4 6 3 2 5-1 5-3M12 8c3-2 5-1 4 1-1 1-3 1-2 2" /></svg>
        <div className="ml-[14px] flex flex-col gap-[2px] text-[13px] leading-4">
          <Fit w={49}>12:49 AM</Fit>
          <Fit w={46} className="ml-px">7/7/2024</Fit>
        </div>
        <svg width="18" height="17" viewBox="0 0 18 17" className="ml-[18px]"><path d="M0 0h18v13h-6l-3 3-3-3H0z" fill="#fff" /><path d="M4 3.500h10M4 6.500h10M4 9.500h6" stroke="#1e3232" /></svg>
        <span className="mr-[3px] ml-[20px] h-10 w-px bg-[#7a8a8a]" />
      </div>
    </div>
  );
}

export default function App() {
  return (
    <div className="flex h-[1343px] w-[2248px] flex-col overflow-hidden bg-white font-['Roboto','Noto_Sans',sans-serif]">
      <TopBar />
      <Toolbar />
      <div className="relative flex min-h-0 flex-1">
        <LeftPanel />
        <FeaturePanel />
        <Viewport />
        <div className="absolute right-[10px] bottom-[4px] flex gap-[14px]">
          <I s={17}><path d="M1 9h7v-3M1 9v7h13l2-3V6" fill="#ccc" /><circle cx="12" cy="6" r="4.500" fill="#fff" /><circle cx="12" cy="6" r="2" /><path d="M3 9v3M6 9v3M9 11v2" /></I>
          <I s={18}><path d="M1 15v-3a8 8 0 0 1 16 0v3zM5 12a4 4 0 0 1 8 0zM3 12a6 6 0 0 1 12 0" fill="#eee" /></I>
          <I s={17}><path d="M9 1v15M2 3h14M4 3l-3 7h6zM14 3l-3 7h6zM2 16h14" strokeWidth="1.400" /></I>
        </div>
      </div>
      <Tabs />
      <Taskbar />
    </div>
  );
}
